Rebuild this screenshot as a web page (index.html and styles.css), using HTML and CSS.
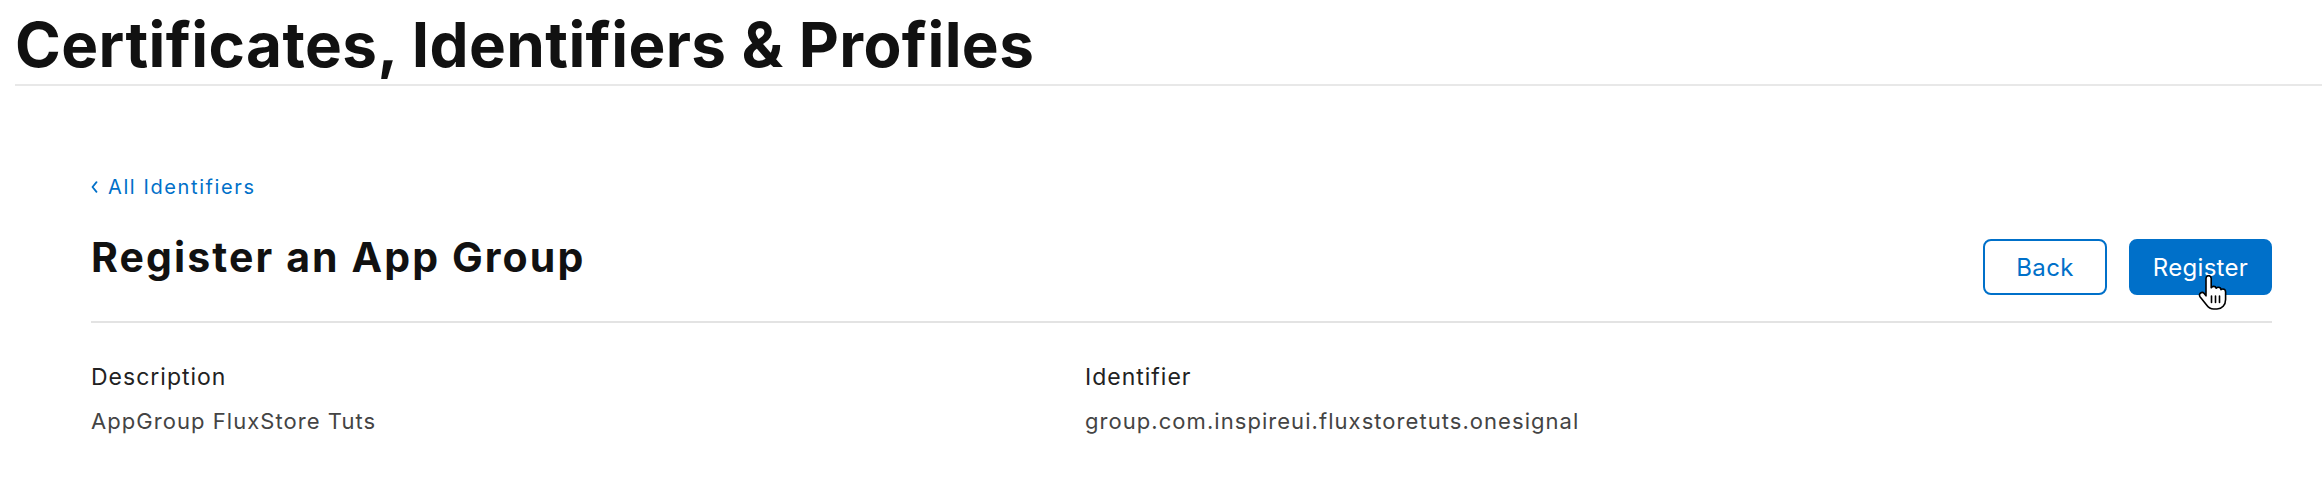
FILE: index.html
```html
<!DOCTYPE html>
<html lang="en">
<head>
<meta charset="utf-8">
<title>Register an App Group</title>
<link rel="stylesheet" href="styles.css">
</head>
<body>
<header class="site-header">
  <h1 class="site-title">Certificates, Identifiers &amp; Profiles</h1>
</header>
<main class="content">
  <a class="back-link" href="#">
    <svg class="chev" width="7" height="12" viewBox="0 0 7 12"><path d="M5.5 1.2 L1.5 6 L5.5 10.8" fill="none" stroke="#0070c9" stroke-width="1.8" stroke-linecap="round" stroke-linejoin="round"/></svg>
    <span>All Identifiers</span>
  </a>
  <div class="page-head">
    <h2 class="page-title">Register an App Group</h2>
    <div class="actions">
      <button class="btn btn-secondary">Back</button>
      <button class="btn btn-primary">Register
        <svg class="cursor" width="34" height="36" viewBox="0 0 34 36">
          <path d="M9 3.5c0-1.7 1.2-2.8 2.6-2.8s2.6 1.1 2.6 2.8v9.3c.5-.9 1.4-1.4 2.4-1.4 1.3 0 2.3.8 2.6 1.9.5-.6 1.3-1 2.2-1 1.4 0 2.5 1 2.6 2.3.5-.4 1.1-.6 1.8-.6 1.6 0 2.8 1.3 2.8 3v7.4c0 5.5-3.6 9.6-8.6 9.6h-3.4c-3 0-5.1-1.3-6.8-3.7L3 21.7c-.9-1.3-.6-2.9.6-3.7 1.2-.8 2.7-.5 3.6.6L9 20.8V3.5z" fill="#fff" stroke="#000" stroke-width="1.6" stroke-linejoin="round"/>
          <path d="M14.5 21v6.5M18.5 21v6.5M22.5 21v6.5" stroke="#000" stroke-width="1.6" stroke-linecap="round"/>
        </svg>
      </button>
    </div>
  </div>
  <dl class="details">
    <div class="field">
      <dt>Description</dt>
      <dd>AppGroup FluxStore Tuts</dd>
    </div>
    <div class="field">
      <dt>Identifier</dt>
      <dd>group.com.inspireui.fluxstoretuts.onesignal</dd>
    </div>
  </dl>
</main>
</body>
</html>
```

FILE: styles.css
```css
* { box-sizing: border-box; }
html, body {
  margin: 0;
  padding: 0;
  background: #ffffff;
}
body {
  font-family: Inter, "Liberation Sans", Arial, sans-serif;
  color: #1d1d1f;
}
.site-header {
  margin-left: 15px;
  padding-top: 9px;
  padding-bottom: 3px;
  border-bottom: 2px solid #e8e8e8;
}
.site-title {
  margin: 0;
  font-size: 62px;
  line-height: 72px;
  font-weight: 700;
  letter-spacing: 0.4px;
  color: #111;
}
.content {
  padding: 0 50px 0 91px;
}
.back-link {
  display: flex;
  width: fit-content;
  align-items: center;
  gap: 10px;
  margin-top: 89px;
  color: #0070c9;
  text-decoration: none;
  font-size: 20px;
  line-height: 24px;
  letter-spacing: 1.6px;
}
.chev { display: block; }
.page-head {
  display: flex;
  justify-content: space-between;
  align-items: flex-start;
  margin-top: 34px;
  padding-bottom: 26px;
  border-bottom: 2px solid #e3e3e3;
}
.page-title {
  margin: 0;
  font-size: 41px;
  line-height: 48px;
  font-weight: 700;
  letter-spacing: 2.1px;
  color: #111;
}
.actions {
  display: flex;
  gap: 22px;
  margin-top: 6px;
}
.btn {
  position: relative;
  height: 56px;
  border-radius: 8px;
  font-family: Inter, "Liberation Sans", Arial, sans-serif;
  font-size: 24px;
  letter-spacing: 0.3px;
  cursor: pointer;
}
.btn-secondary {
  width: 124px;
  background: #fff;
  border: 2px solid #0070c9;
  color: #0070c9;
}
.btn-primary {
  width: 143px;
  background: #0070c9;
  border: 2px solid #0070c9;
  color: #fff;
}
.cursor {
  position: absolute;
  left: 66px;
  top: 34px;
}
.details {
  display: grid;
  grid-template-columns: 994px 1fr;
  margin: 40px 0 0 0;
}
.field dt {
  font-size: 23px;
  line-height: 28px;
  letter-spacing: 1px;
  color: #222;
}
.field dd {
  margin: 16px 0 0 0;
  font-size: 22px;
  line-height: 28px;
  letter-spacing: 1.05px;
  color: #444;
}
```
